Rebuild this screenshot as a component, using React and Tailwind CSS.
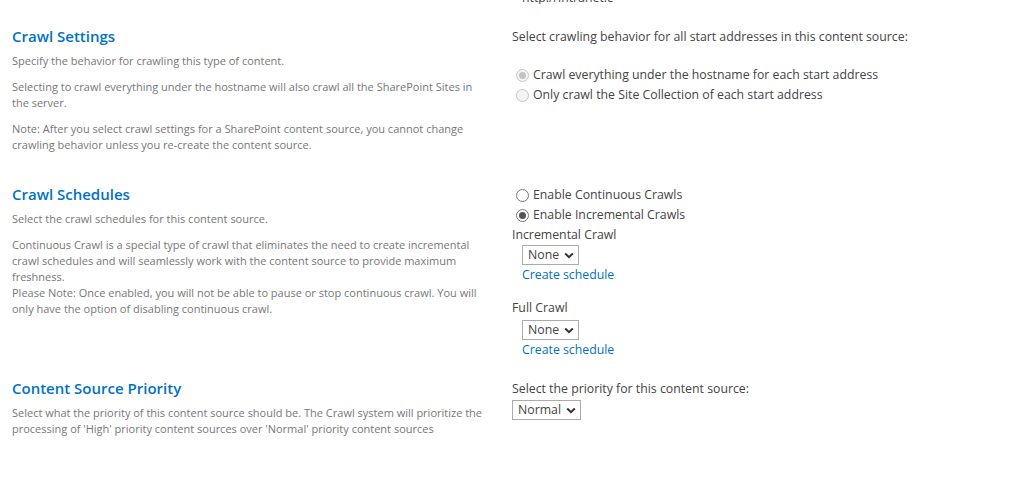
function Radio({ checked, disabled }) {
  return (
    <span
      className={`inline-flex items-center justify-center w-[13px] h-[13px] rounded-full border shrink-0 ${
        disabled ? 'border-[#c6c6c6] bg-[#f4f4f4]' : 'border-[#767676] bg-white'
      }`}
    >
      {checked && (
        <span
          className={`w-[7px] h-[7px] rounded-full ${disabled ? 'bg-[#c2c2c2]' : 'bg-[#555]'}`}
        />
      )}
    </span>
  );
}

function RadioRow({ label, checked, disabled }) {
  return (
    <label className="flex items-center gap-[4px] h-[20px] pl-[4px]">
      <Radio checked={checked} disabled={disabled} />
      <span>{label}</span>
    </label>
  );
}

function Select({ value, className = '' }) {
  return (
    <div
      className={`inline-flex items-center h-[20px] border border-[#ababab] bg-white pl-[5px] pr-[4px] gap-[5px] text-[#444] ${className}`}
    >
      <span className="leading-none">{value}</span>
      <svg width="10" height="7" viewBox="0 0 10 7" className="mt-[1px]">
        <path d="M1.2 1.5 L5 5.2 L8.8 1.5" fill="none" stroke="#333" strokeWidth="2" />
      </svg>
    </div>
  );
}

function SectionText({ title, children }) {
  return (
    <div className="w-[500px] pl-[12px] pr-[10px] shrink-0">
      <h2 className="text-[15px] leading-[20px] font-semibold text-[#0072c6]">{title}</h2>
      <div className="mt-[7px] text-[11px] leading-[16px] text-[#777] space-y-[10px]">{children}</div>
    </div>
  );
}

export default function App() {
  return (
    <div
      className="w-[1024px] h-[481px] bg-white overflow-hidden text-[12.3px] text-[#444]"
      style={{ fontFamily: '"Segoe UI", "Open Sans", "Noto Sans", sans-serif' }}
    >
      {/* clipped address from the section above */}
      <div className="h-[4px] overflow-hidden flex items-end">
        <span className="ml-[522px] leading-[13px] text-[#444]">http://intranet.c</span>
      </div>

      {/* Crawl Settings */}
      <section className="flex mt-[22px] min-h-[158px]">
        <SectionText title="Crawl Settings">
          <p>Specify the behavior for crawling this type of content.</p>
          <p>
            Selecting to crawl everything under the hostname will also crawl all the SharePoint Sites in
            the server.
          </p>
          <p>
            Note: After you select crawl settings for a SharePoint content source, you cannot change
            crawling behavior unless you re-create the content source.
          </p>
        </SectionText>
        <div className="pl-[12px] pt-[1px]">
          <p className="leading-[19px]">Select crawling behavior for all start addresses in this content source:</p>
          <div className="mt-[19px]">
            <RadioRow label="Crawl everything under the hostname for each start address" checked disabled />
            <RadioRow label="Only crawl the Site Collection of each start address" disabled />
          </div>
        </div>
      </section>

      {/* Crawl Schedules */}
      <section className="flex min-h-[194px]">
        <SectionText title="Crawl Schedules">
          <p>Select the crawl schedules for this content source.</p>
          <p>
            Continuous Crawl is a special type of crawl that eliminates the need to create incremental
            crawl schedules and will seamlessly work with the content source to provide maximum
            freshness.
            <br />
            Please Note: Once enabled, you will not be able to pause or stop continuous crawl. You will
            only have the option of disabling continuous crawl.
          </p>
        </SectionText>
        <div className="pl-[12px] pt-[1px]">
          <RadioRow label="Enable Continuous Crawls" />
          <RadioRow label="Enable Incremental Crawls" checked />
          <p className="leading-[19px]">Incremental Crawl</p>
          <Select value="None" className="ml-[10px] mt-[1px]" />
          <a className="block ml-[10px] leading-[19px] text-[#0072c6]">Create schedule</a>
          <p className="leading-[20px] mt-[14px]">Full Crawl</p>
          <Select value="None" className="ml-[10px] mt-[2px]" />
          <a className="block ml-[10px] leading-[19px] text-[#0072c6]">Create schedule</a>
        </div>
      </section>

      {/* Content Source Priority */}
      <section className="flex">
        <SectionText title="Content Source Priority">
          <p>
            Select what the priority of this content source should be. The Crawl system will prioritize the
            processing of 'High' priority content sources over 'Normal' priority content sources
          </p>
        </SectionText>
        <div className="pl-[12px] pt-[1px]">
          <p className="leading-[20px]">Select the priority for this content source:</p>
          <Select value="Normal" className="mt-[1px]" />
        </div>
      </section>
    </div>
  );
}
